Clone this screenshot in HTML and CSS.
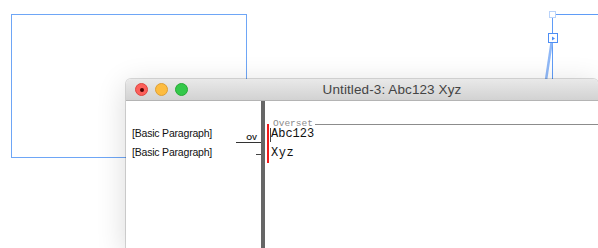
FILE: index.html
```html
<!DOCTYPE html>
<html lang="en">
<head>
    <meta charset="UTF-8">
    <title>Untitled-3: Abc123 Xyz</title>
    <link rel="stylesheet" href="styles.css">
</head>
<body>

    <!-- layout canvas behind the story editor -->
    <svg class="canvas" width="598" height="248" viewBox="0 0 598 248">
        <rect x="11.5" y="14.5" width="235" height="143" fill="none" stroke="#6ea6f6" stroke-width="1"/>
        <line x1="552.5" y1="14.5" x2="598" y2="14.5" stroke="#5f9cf7" stroke-width="1"/>
        <line x1="552.5" y1="14.5" x2="552.5" y2="80" stroke="#5f9cf7" stroke-width="1"/>
        <rect x="549.5" y="11.5" width="6" height="6" fill="#fff" stroke="#b9d3fa" stroke-width="1"/>
        <line x1="551.5" y1="43" x2="546" y2="80" stroke="#8fb8f7" stroke-width="2.5"/>
        <rect x="548.5" y="33.5" width="9" height="9" fill="#fff" stroke="#4d8ef5" stroke-width="1"/>
        <polygon points="552,36.5 555,38.5 552,40.5" fill="#4d8ef5"/>
    </svg>

    <div class="window">
        <div class="titlebar">
            <div class="lights">
                <span class="light red"><span class="dot"></span></span>
                <span class="light yellow"></span>
                <span class="light green"></span>
            </div>
            <div class="title">Untitled-3: Abc123 Xyz</div>
        </div>

        <div class="story">
            <div class="styles-col">
                <div class="row">
                    <span class="pstyle">[Basic Paragraph]</span>
                    <span class="ov">OV</span>
                </div>
                <div class="row">
                    <span class="pstyle">[Basic Paragraph]</span>
                    <span class="tick"></span>
                </div>
            </div>
            <div class="divider"></div>
            <div class="text-col">
                <div class="overset">Overset</div>
                <div class="lines">
                    <div class="redbar"></div>
                    <div class="text">
                        <div class="line"><span class="caret"></span>Abc123</div>
                        <div class="line wide">Xyz</div>
                    </div>
                </div>
            </div>
        </div>
    </div>

</body>
</html>
```

FILE: styles.css
```css
body {
    margin: 0;
    width: 598px;
    height: 248px;
    overflow: hidden;
    position: relative;
    background: #ffffff;
    font-family: "Liberation Sans", Arial, sans-serif;
}

.canvas {
    position: absolute;
    left: 0;
    top: 0;
}

.window {
    position: absolute;
    left: 126px;
    top: 79px;
    width: 472px;
    height: 169px;
    background: white;
    border-radius: 5px 5px 0 0;
    box-shadow: 0 0 0 1px rgba(0, 0, 0, 0.14), 0 6px 30px rgba(0, 0, 0, 0.16);
    display: flex;
    flex-direction: column;
}

.titlebar {
    height: 21px;
    display: flex;
    align-items: center;
    position: relative;
    background: linear-gradient(#e9e9e9, #d2d2d2);
    border-bottom: 1px solid #b4b4b4;
    border-radius: 5px 5px 0 0;
}

.lights {
    display: flex;
    gap: 7px;
    padding-left: 9px;
}

.light {
    width: 11px;
    height: 11px;
    border-radius: 50%;
    display: flex;
    align-items: center;
    justify-content: center;
}

.red { background: #fc605b; border: 0.5px solid #de4640; }
.yellow { background: #fdbc40; border: 0.5px solid #de9f34; }
.green { background: #34c84a; border: 0.5px solid #27aa35; }

.dot {
    width: 4px;
    height: 4px;
    border-radius: 50%;
    background: #4d0000;
}

/* window runs off screen, so the centred title sits right of the visible middle */
.title {
    position: absolute;
    left: 60px;
    right: 0;
    text-align: center;
    font-size: 13.5px;
    color: #444;
    letter-spacing: 0.1px;
}

.story {
    flex: 1;
    display: flex;
}

.styles-col {
    width: 135px;
    padding-top: 23px;
}

.row {
    height: 19px;
    display: flex;
    align-items: flex-start;
    padding-left: 6px;
}

.pstyle {
    flex: 1;
    font-size: 10.5px;
    letter-spacing: -0.2px;
    line-height: 19px;
    color: #111;
}

.ov {
    width: 21px;
    height: 9px;
    margin-top: 9px;
    border-bottom: 1px solid #333;
    font-size: 7.5px;
    font-weight: bold;
    line-height: 9px;
    text-align: right;
    padding-right: 4px;
    color: #222;
}

.tick {
    width: 5px;
    height: 0;
    margin-top: 11px;
    border-bottom: 1.5px solid #444;
}

.divider {
    width: 4px;
    background: #666;
}

.text-col {
    flex: 1;
    padding-top: 19px;
}

.overset {
    display: flex;
    align-items: center;
    height: 8px;
    line-height: 8px;
    padding-left: 8px;
    font-family: "Liberation Mono", "DejaVu Sans Mono", monospace;
    font-size: 9.5px;
    color: #8c8c8c;
}

.overset::after {
    content: "";
    flex: 1;
    height: 1px;
    margin-left: 2px;
    background: #8c8c8c;
}

.lines {
    display: flex;
    margin-top: -4px;
    padding-left: 2px;
}

.redbar {
    width: 2px;
    height: 39px;
    background: #f21b1b;
}

.text {
    font-family: "Liberation Mono", "DejaVu Sans Mono", monospace;
    font-size: 12px;
    color: #111;
}

.line {
    position: relative;
    height: 19px;
    line-height: 20px;
    padding-left: 2px;
}

.line.wide {
    letter-spacing: 0.5px;
}

.caret {
    position: absolute;
    left: 1px;
    top: 4px;
    width: 1px;
    height: 14px;
    background: #444;
}
```
